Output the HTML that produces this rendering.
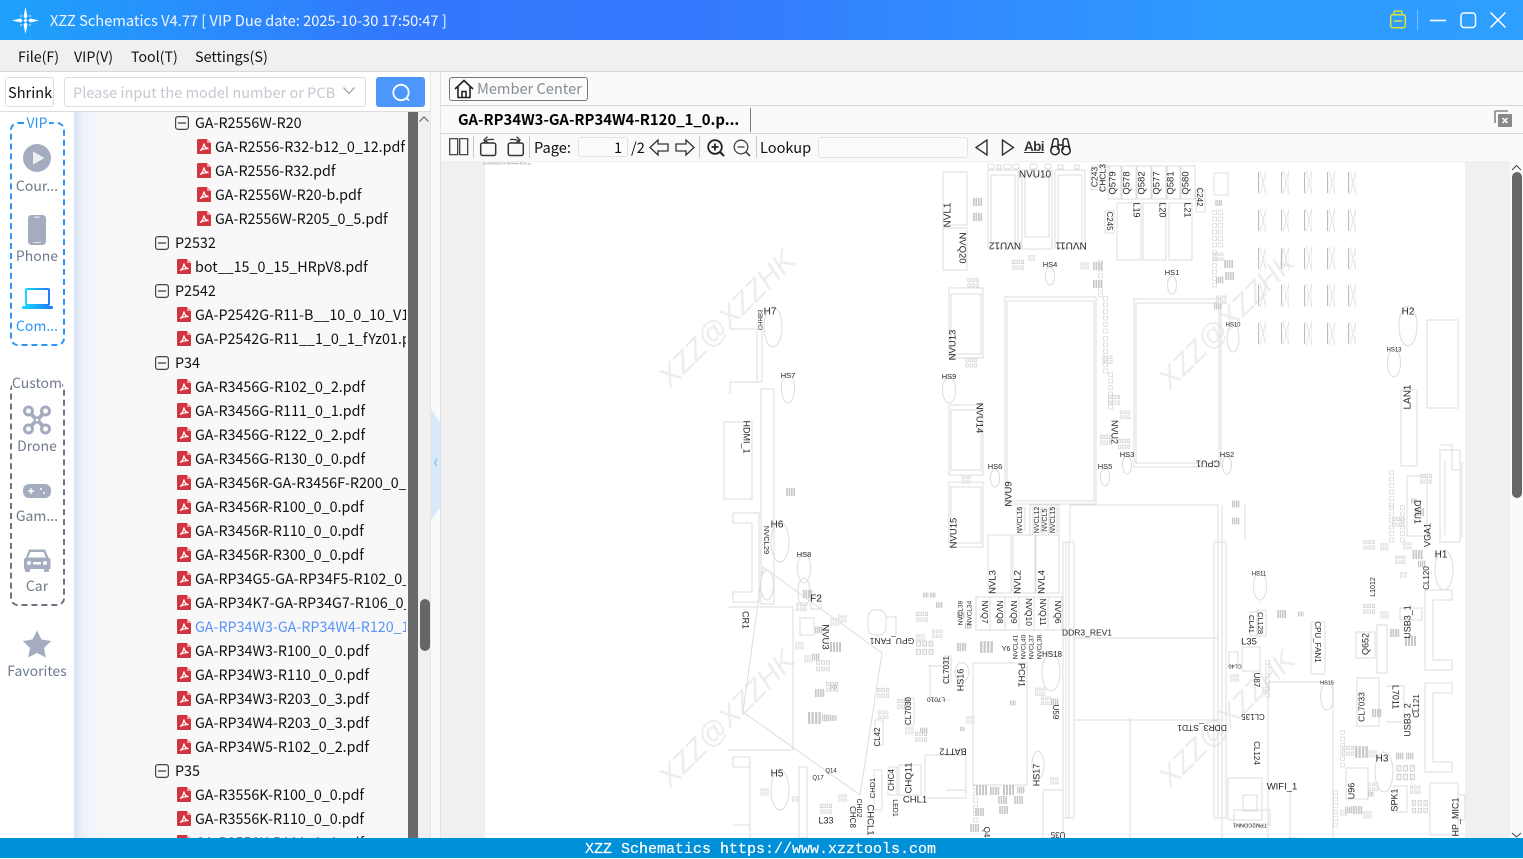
<!DOCTYPE html>
<html><head><meta charset="utf-8"><title>XZZ Schematics</title>
<style>
*{box-sizing:border-box}
html,body{margin:0;padding:0;width:1523px;height:858px;overflow:hidden;background:#fafafa;font-family:"Noto Sans CJK SC","Liberation Sans",sans-serif;color:#111}
.a{position:absolute}
.t{position:absolute;white-space:nowrap;line-height:20px}
#title{left:0;top:0;width:1523px;height:40px;background:linear-gradient(90deg,#1ea2fb 0,#3378fc 26%,#3478fd 45%,#2f9bff 80%,#2e9eff 100%)}
#menu{left:0;top:40px;width:1523px;height:32px;background:#f0f0f0;border-bottom:1px solid #d8d8d8}
#tree{left:74px;top:112px;width:332px;height:726px;overflow:hidden;font-size:14.3px}
#treebg{left:74px;top:112px;width:334px;height:726px;background:linear-gradient(90deg,#d8e3f5 0,#eef2f9 10px,#f8f8f8 34px)}
.r{position:relative;height:24px;line-height:24px;white-space:nowrap}
.r svg{position:absolute;top:5px}
.g1{padding-left:101px}.g1 svg{left:81px}
.g2{padding-left:121px}.g2 svg{left:101px}
.f2{padding-left:121px}.f2 svg{left:103px;top:4px}
.f3{padding-left:141px}.f3 svg{left:123px;top:4px}
.lb{position:absolute;left:0;width:74px;text-align:center;font-size:14px;line-height:20px;color:#6f7a8a}
.box{position:absolute;background:#fff;border:1px solid #ddd;border-radius:3px}
.sep{position:absolute;width:1px;background:#c8c8c8;top:136px;height:22px}
#sch text{font-family:"Liberation Sans",sans-serif;fill:#262626;text-anchor:middle;dominant-baseline:middle}
</style></head><body>
<svg width="0" height="0" style="position:absolute">
<defs>
<symbol id="pdf" viewBox="0 0 14 15"><path d="M1 0H10L14 4V14a1 1 0 0 1-1 1H1a1 1 0 0 1-1-1V1a1 1 0 0 1 1-1z" fill="#d2353f"/><path d="M10 0V4H14z" fill="#ee9aa0"/><path d="M3 11.5C5 10.5 6.5 8 7 4.5 7.5 8 9 9.5 11.5 9.5 9 9.5 5.5 10 3 11.5z" fill="none" stroke="#fff" stroke-width="1.2"/></symbol>
<symbol id="min" viewBox="0 0 14 14"><rect x=".6" y=".6" width="12.8" height="12.8" rx="2.5" fill="none" stroke="#444" stroke-width="1.2"/><path d="M3 7H11" stroke="#333" stroke-width="1.2"/></symbol>
<symbol id="cl" viewBox="0 0 16 12"><path d="M.5.5h3v4h-3zM5.5.5h3v4h-3zM10.5.5h3v4h-3zM.5 7h3v4h-3zM5.5 7h3v4h-3zM10.5 7h3v4h-3z" fill="#f6f6f6" stroke="#c6c6c6" stroke-width=".6"/></symbol>
<symbol id="dk" viewBox="0 0 12 10"><path d="M0 0h2v10H0zM3 0h2v10H3zM6 0h2v10H6zM9 0h2v10H9z" fill="#c8c8c8"/></symbol>
<symbol id="col" viewBox="0 0 6 40"><path d="M.5.5h4v4h-4zM.5 7h4v4h-4zM.5 13.5h4v4h-4zM.5 20h4v4h-4zM.5 26.5h4v4h-4zM.5 33h4v4h-4z" fill="none" stroke="#ccc" stroke-width=".6"/></symbol>
<symbol id="xb" viewBox="0 0 8 25"><path d="M8 .5V24.5M2 24.5L8 .5M2 .5L8 24.5" fill="none" stroke="#dedede" stroke-width=".7"/><rect x="0" y="2" width="1.1" height="21" fill="#bdbdbd"/></symbol>
</defs></svg>

<div class="a" id="title"></div>
<svg class="a" style="left:12px;top:7px" width="27" height="27" viewBox="0 0 27 27"><path d="M13.5 0L15.5 9.5 13.5 12 11.5 9.5zM13.5 27L11.5 17.5 13.5 15 15.5 17.5zM0 13.5L8.5 11.5 11 13.5 8.5 15.5zM27 13.5L18.5 15.5 16 13.5 18.5 11.5z" fill="#fff"/><circle cx="13.5" cy="13.5" r="1.5" fill="#fff"/><circle cx="9" cy="9" r=".9" fill="#cfe6ff"/><circle cx="18" cy="9" r=".9" fill="#cfe6ff"/><circle cx="9" cy="18" r=".9" fill="#cfe6ff"/><circle cx="18" cy="18" r=".9" fill="#cfe6ff"/></svg>
<div class="t" style="left:50px;top:11px;font-size:14.67px;color:#f2f7ff">XZZ Schematics V4.77 [ VIP Due date: 2025-10-30 17:50:47 ]</div>
<svg class="a" style="left:1385px;top:8px" width="130" height="26" viewBox="0 0 130 26"><g fill="none" stroke="#d8e23a" stroke-width="1.5"><rect x="5.7" y="6.7" width="14.6" height="13" rx="2"/><path d="M9 6.5V4.5a1.5 1.5 0 0 1 1.5-1.5h5A1.5 1.5 0 0 1 17 4.5V6.5M9 13H17"/></g><path d="M32.5 2V22" stroke="#7fbcff"/><path d="M45 12.5H61" stroke="#fff" stroke-width="1.6"/><rect x="76" y="5" width="14.5" height="14.5" rx="3" fill="none" stroke="#fff" stroke-width="1.5"/><path d="M105.5 4.5L120.5 19.5M120.5 4.500L105.500 19.500" stroke="#fff" stroke-width="1.5"/></svg>

<div class="a" id="menu"></div>
<div class="t" style="left:18px;top:47px;font-size:14.2px">File(F)</div>
<div class="t" style="left:74px;top:47px;font-size:14.2px">VIP(V)</div>
<div class="t" style="left:131px;top:47px;font-size:14.2px">Tool(T)</div>
<div class="t" style="left:195px;top:47px;font-size:14.4px">Settings(S)</div>

<!-- left toolbar -->
<div class="a" style="left:0;top:72px;width:430px;height:40px;background:#fff;border-bottom:1px solid #dcdcdc"></div>
<div class="box" style="left:5px;top:77px;width:49px;height:30px;border-color:#ddd"></div>
<div class="t" style="left:8px;top:83px;font-size:14.6px">Shrink</div>
<div class="box" style="left:64px;top:77px;width:302px;height:30px"></div>
<div class="t" style="left:73px;top:83px;font-size:14.55px;color:#c4c8cf">Please input the model number or PCB</div>
<svg class="a" style="left:342px;top:86px" width="14" height="10" viewBox="0 0 14 10"><path d="M1.5 1.5L7 7.5 12.5 1.5" fill="none" stroke="#a8abb0" stroke-width="1.4"/></svg>
<div class="a" style="left:376px;top:77px;width:49px;height:30px;background:#4d96fb;border-radius:3px"></div>
<svg class="a" style="left:390px;top:82px" width="22" height="22" viewBox="0 0 22 22"><circle cx="11" cy="10.5" r="7.7" fill="none" stroke="#fff" stroke-width="1.8"/><path d="M16.5 16L19 18.5" stroke="#fff" stroke-width="1.8"/></svg>

<!-- side tabs -->
<div class="a" style="left:0;top:112px;width:74px;height:726px;background:#fff"></div>
<div class="a" style="left:10px;top:122px;width:55px;height:224px;border:2px dashed #2f95f5;border-radius:8px"></div>
<div class="lb" style="top:113px;color:#2f95f5"><span style="background:#fff;padding:0 1px">VIP</span></div>
<svg class="a" style="left:23px;top:144px" width="28" height="28" viewBox="0 0 28 28"><circle cx="14" cy="14" r="14" fill="#a4acbf"/><path d="M10 7.5L21.5 14 10 20.5z" fill="#eef0f4"/></svg>
<div class="lb" style="top:176px">Cour...</div>
<svg class="a" style="left:28px;top:214px" width="18" height="32" viewBox="0 0 18 32"><rect width="18" height="30" y="1" rx="3.5" fill="#a4acbf"/><rect x="6" y="2.5" width="6" height="1.5" rx=".7" fill="#dfe2e9"/><rect x="5" y="28" width="8" height="1" fill="#dfe2e9"/></svg>
<div class="lb" style="top:246px">Phone</div>
<svg class="a" style="left:22px;top:288px" width="31" height="22" viewBox="0 0 31 22"><defs><linearGradient id="lg" x1="0" y1="0" x2="1" y2="0"><stop offset="0" stop-color="#18d4ff"/><stop offset="1" stop-color="#1f7dff"/></linearGradient></defs><rect x="4" y="1" width="23" height="16" rx="1" fill="none" stroke="url(#lg)" stroke-width="2"/><rect x="0" y="18" width="31" height="3" rx="1.2" fill="url(#lg)"/></svg>
<div class="lb" style="top:316px;color:#2f95f5">Com...</div>

<div class="a" style="left:10px;top:382px;width:55px;height:224px;border:2px dashed #6b7480;border-radius:8px"></div>
<div class="lb" style="top:373px"><span style="background:#fff">Custom</span></div>
<svg class="a" style="left:23px;top:405px" width="28" height="30" viewBox="0 0 28 30"><g fill="none" stroke="#a4acbf"><circle cx="5.5" cy="6" r="4" stroke-width="3"/><circle cx="22.5" cy="6" r="4" stroke-width="3"/><circle cx="5.5" cy="24" r="4" stroke-width="3"/><circle cx="22.5" cy="24" r="4" stroke-width="3"/><path d="M8 9L20 21M20 9L8 21" stroke-width="4"/></g><circle cx="14" cy="15" r="3.5" fill="#a4acbf"/><circle cx="14" cy="15" r="1.3" fill="#fff"/></svg>
<div class="lb" style="top:436px">Drone</div>
<svg class="a" style="left:23px;top:484px" width="28" height="14" viewBox="0 0 28 14"><rect width="28" height="14" rx="6" fill="#a4acbf"/><path d="M5 7H11M8 4V10" stroke="#fff" stroke-width="1.4"/><circle cx="18" cy="5" r="1" fill="#fff"/><circle cx="21" cy="9" r="1" fill="#fff"/></svg>
<div class="lb" style="top:506px">Gam...</div>
<svg class="a" style="left:23px;top:548px" width="28" height="24" viewBox="0 0 28 24"><path d="M6 1.5H22L25.5 9.5 27.5 11V21H1V11L3 9.5z" fill="#a4acbf"/><path d="M7.5 4H20.5L23 9.5H5z" fill="#fff"/><rect x="2" y="20" width="5" height="4" rx="1" fill="#a4acbf"/><rect x="21" y="20" width="5" height="4" rx="1" fill="#a4acbf"/><circle cx="6" cy="15" r="2" fill="#fff"/><circle cx="22" cy="15" r="2" fill="#fff"/><rect x="10" y="14" width="8" height="2.5" fill="#fff"/></svg>
<div class="lb" style="top:576px">Car</div>
<svg class="a" style="left:22px;top:630px" width="30" height="28" viewBox="0 0 30 28"><path d="M15 .5L19.5 9.5 29.2 11 22 18 23.8 27.5 15 23 6.2 27.5 8 18 .8 11 10.5 9.5z" fill="#a4acbf"/></svg>
<div class="lb" style="top:661px">Favorites</div>

<!-- tree -->
<div class="a" id="treebg"></div>
<div class="a" id="tree"><div style="margin-top:-1px">
<div class="r g2"><svg width="14" height="14"><use href="#min"/></svg>GA-R2556W-R20</div>
<div class="r f3"><svg width="14" height="15"><use href="#pdf"/></svg>GA-R2556-R32-b12_0_12.pdf</div>
<div class="r f3"><svg width="14" height="15"><use href="#pdf"/></svg>GA-R2556-R32.pdf</div>
<div class="r f3"><svg width="14" height="15"><use href="#pdf"/></svg>GA-R2556W-R20-b.pdf</div>
<div class="r f3"><svg width="14" height="15"><use href="#pdf"/></svg>GA-R2556W-R205_0_5.pdf</div>
<div class="r g1"><svg width="14" height="14"><use href="#min"/></svg>P2532</div>
<div class="r f2"><svg width="14" height="15"><use href="#pdf"/></svg>bot__15_0_15_HRpV8.pdf</div>
<div class="r g1"><svg width="14" height="14"><use href="#min"/></svg>P2542</div>
<div class="r f2"><svg width="14" height="15"><use href="#pdf"/></svg>GA-P2542G-R11-B__10_0_10_V1.pdf</div>
<div class="r f2"><svg width="14" height="15"><use href="#pdf"/></svg>GA-P2542G-R11__1_0_1_fYz01.pdf</div>
<div class="r g1"><svg width="14" height="14"><use href="#min"/></svg>P34</div>
<div class="r f2"><svg width="14" height="15"><use href="#pdf"/></svg>GA-R3456G-R102_0_2.pdf</div>
<div class="r f2"><svg width="14" height="15"><use href="#pdf"/></svg>GA-R3456G-R111_0_1.pdf</div>
<div class="r f2"><svg width="14" height="15"><use href="#pdf"/></svg>GA-R3456G-R122_0_2.pdf</div>
<div class="r f2"><svg width="14" height="15"><use href="#pdf"/></svg>GA-R3456G-R130_0_0.pdf</div>
<div class="r f2"><svg width="14" height="15"><use href="#pdf"/></svg>GA-R3456R-GA-R3456F-R200_0_2.pdf</div>
<div class="r f2"><svg width="14" height="15"><use href="#pdf"/></svg>GA-R3456R-R100_0_0.pdf</div>
<div class="r f2"><svg width="14" height="15"><use href="#pdf"/></svg>GA-R3456R-R110_0_0.pdf</div>
<div class="r f2"><svg width="14" height="15"><use href="#pdf"/></svg>GA-R3456R-R300_0_0.pdf</div>
<div class="r f2"><svg width="14" height="15"><use href="#pdf"/></svg>GA-RP34G5-GA-RP34F5-R102_0_2.pdf</div>
<div class="r f2"><svg width="14" height="15"><use href="#pdf"/></svg>GA-RP34K7-GA-RP34G7-R106_0_6.pdf</div>
<div class="r f2" style="color:#5b93f5"><svg width="14" height="15"><use href="#pdf"/></svg>GA-RP34W3-GA-RP34W4-R120_1_0.pdf</div>
<div class="r f2"><svg width="14" height="15"><use href="#pdf"/></svg>GA-RP34W3-R100_0_0.pdf</div>
<div class="r f2"><svg width="14" height="15"><use href="#pdf"/></svg>GA-RP34W3-R110_0_0.pdf</div>
<div class="r f2"><svg width="14" height="15"><use href="#pdf"/></svg>GA-RP34W3-R203_0_3.pdf</div>
<div class="r f2"><svg width="14" height="15"><use href="#pdf"/></svg>GA-RP34W4-R203_0_3.pdf</div>
<div class="r f2"><svg width="14" height="15"><use href="#pdf"/></svg>GA-RP34W5-R102_0_2.pdf</div>
<div class="r g1"><svg width="14" height="14"><use href="#min"/></svg>P35</div>
<div class="r f2"><svg width="14" height="15"><use href="#pdf"/></svg>GA-R3556K-R100_0_0.pdf</div>
<div class="r f2"><svg width="14" height="15"><use href="#pdf"/></svg>GA-R3556K-R110_0_0.pdf</div>
<div class="r f2"><svg width="14" height="15"><use href="#pdf"/></svg>GA-R3556K-R101_0_1.pdf</div>
</div></div>
<div class="a" style="left:408px;top:112px;width:10px;height:726px;background:#696969"></div>
<div class="a" style="left:418px;top:112px;width:12px;height:726px;background:#f0f0f0"></div>
<svg class="a" style="left:418px;top:114px" width="12" height="10" viewBox="0 0 12 10"><path d="M1.5 7.5L6 3 10.5 7.5" fill="none" stroke="#555" stroke-width="1"/></svg>
<div class="a" style="left:420px;top:599px;width:10px;height:52px;background:#666;border-radius:5px"></div>

<!-- splitter -->
<div class="a" style="left:430px;top:72px;width:1px;height:766px;background:#e6e6e6"></div>
<div class="a" style="left:440px;top:72px;width:1px;height:766px;background:#e2e2e2"></div>
<svg class="a" style="left:431px;top:409px" width="10" height="112" viewBox="0 0 10 112"><path d="M0 0L9 13V99L0 111z" fill="#d6eafc"/><path d="M6 50L3.5 53.5 6 57" fill="none" stroke="#7db0e8" stroke-width="1"/></svg>

<!-- right header -->
<div class="a" style="left:441px;top:105px;width:1082px;height:1px;background:#d8d8d8"></div>
<div class="a" style="left:441px;top:133px;width:1082px;height:1px;background:#d8d8d8"></div>
<div class="a" style="left:449px;top:77px;width:139px;height:24px;border:1px solid #777;border-radius:3px;background:#fbfbfb"></div>
<svg class="a" style="left:454px;top:79px" width="20" height="20" viewBox="0 0 20 20"><path d="M1 10L10 1.5 19 10M4 8V18.5H16V8M8 18.5V12.5H12V18.5" fill="none" stroke="#222" stroke-width="1.6"/></svg>
<div class="t" style="left:477px;top:79px;font-size:14.6px;color:#858d96">Member Center</div>
<div class="t" style="left:458px;top:110px;font-size:14.85px;font-weight:700;color:#000">GA-RP34W3-GA-RP34W4-R120_1_0.p...</div>
<div class="a" style="left:750px;top:108px;width:1px;height:24px;background:#777"></div>
<svg class="a" style="left:1494px;top:110px" width="19" height="18" viewBox="0 0 19 18"><path d="M1 13V2a1 1 0 0 1 1-1H14" fill="none" stroke="#888" stroke-width="1.6"/><rect x="4" y="4" width="14" height="13" rx="1" fill="#888"/><path d="M8.5 8L13.5 13M13.5 8L8.5 13" stroke="#fff" stroke-width="1.5"/></svg>

<!-- pdf toolbar -->
<svg class="a" style="left:449px;top:138px" width="20" height="18" viewBox="0 0 20 18"><path d="M.7.7H8.700V16.700H.7zM10.700.7H18.700V16.700H10.700z" fill="none" stroke="#333" stroke-width="1.2"/></svg>
<div class="sep" style="left:473px"></div>
<svg class="a" style="left:479px;top:136px" width="20" height="21" viewBox="0 0 20 21"><rect x="1.7" y="7" width="15" height="12.5" rx="2" fill="none" stroke="#333" stroke-width="1.5"/><path d="M5 7C6 3.5 10 3 15 3.5" fill="none" stroke="#333" stroke-width="1.3"/><path d="M8.5.7L5 4 9 6.7" fill="none" stroke="#333" stroke-width="1.3"/></svg>
<svg class="a" style="left:505px;top:136px" width="20" height="21" viewBox="0 0 20 21"><g transform="matrix(-1 0 0 1 20 0)"><rect x="1.7" y="7" width="15" height="12.5" rx="2" fill="none" stroke="#333" stroke-width="1.5"/><path d="M5 7C6 3.5 10 3 15 3.5" fill="none" stroke="#333" stroke-width="1.3"/><path d="M8.5.7L5 4 9 6.7" fill="none" stroke="#333" stroke-width="1.3"/></g></svg>
<div class="sep" style="left:529px"></div>
<div class="t" style="left:534px;top:138px;font-size:14.6px">Page:</div>
<div class="box" style="left:578px;top:137px;width:50px;height:20px;background:#fbfbfb;border-color:#e2e2e2"></div>
<div class="t" style="left:614px;top:138px;font-size:14.6px">1</div>
<div class="t" style="left:631px;top:138px;font-size:14.6px">/2</div>
<svg class="a" style="left:649px;top:138px" width="46" height="19" viewBox="0 0 46 19"><path d="M1 9.5L9 2V6H19V13H9V17z" fill="none" stroke="#333" stroke-width="1.3"/><path d="M45 9.5L37 2V6H27V13H37V17z" fill="none" stroke="#333" stroke-width="1.3"/></svg>
<div class="sep" style="left:699px"></div>
<svg class="a" style="left:706px;top:138px" width="46" height="19" viewBox="0 0 46 19"><circle cx="9" cy="9" r="6.8" fill="none" stroke="#222" stroke-width="1.8"/><path d="M14 14L18 18" stroke="#222" stroke-width="2"/><path d="M5.5 9H12.5M9 5.5V12.5" stroke="#222" stroke-width="1.8"/><circle cx="35" cy="9" r="6.8" fill="none" stroke="#444" stroke-width="1.3"/><path d="M40 14L44 18" stroke="#444" stroke-width="1.6"/><path d="M31.5 9H38.5" stroke="#444" stroke-width="1.3"/></svg>
<div class="sep" style="left:756px"></div>
<div class="t" style="left:760px;top:138px;font-size:14.6px">Lookup</div>
<div class="box" style="left:818px;top:137px;width:150px;height:21px;background:#fbfbfb;border-color:#e2e2e2"></div>
<svg class="a" style="left:974px;top:139px" width="42" height="17" viewBox="0 0 42 17"><path d="M13 1L2 8.5 13 16zM28.500 1L39.500 8.500 28.500 16z" fill="none" stroke="#333" stroke-width="1.4"/></svg>
<div class="t" style="left:1024px;top:137px;font-size:13.5px;font-weight:700;color:#333;font-family:'Liberation Sans',sans-serif;text-decoration:underline;letter-spacing:-.6px">Abi</div>
<svg class="a" style="left:1050px;top:138px" width="21" height="18" viewBox="0 0 21 18"><g fill="none" stroke="#222" stroke-width="1.5"><circle cx="5" cy="12.5" r="4.2"/><circle cx="16" cy="12.5" r="4.2"/><path d="M1 12L3 3A2.2 2.2 0 0 1 8 3V12M13 12V3A2.2 2.2 0 0 1 18 3L20 12M8 7H13"/></g></svg>

<!-- doc area -->
<div class="a" style="left:441px;top:161px;width:1069px;height:677px;background:#f0f0f0"></div>
<div class="a" style="left:1510px;top:161px;width:13px;height:677px;background:#fafafa"></div>
<svg class="a" style="left:1510px;top:164px" width="13" height="8" viewBox="0 0 13 8"><path d="M2 6L6.5 1.5 11 6" fill="none" stroke="#444"/></svg>
<svg class="a" style="left:1510px;top:832px" width="13" height="6" viewBox="0 0 13 6"><path d="M2 1L6.5 5 11 1" fill="none" stroke="#444"/></svg>
<div class="a" style="left:1512px;top:172px;width:10px;height:326px;background:#666;border-radius:5px"></div>

<svg id="sch" class="a" style="left:0;top:0" width="1523" height="858" viewBox="0 0 1523 858">
<rect x="485" y="162" width="980" height="676" fill="#fff"/>
<g font-style="italic">
<text x="728" y="320" transform="rotate(-45 728 320)" font-size="29" style="fill:#ebedf0">XZZ@XZZHK</text>
<text x="1228" y="322" transform="rotate(-45 1228 322)" font-size="29" style="fill:#ebedf0">XZZ@XZZHK</text>
<text x="728" y="720" transform="rotate(-45 728 720)" font-size="29" style="fill:#ebedf0">XZZ@XZZHK</text>
<text x="1228" y="720" transform="rotate(-45 1228 720)" font-size="29" style="fill:#ebedf0">XZZ@XZZHK</text>
</g>
<text x="507" y="163.5" font-size="3" style="fill:#777">GA-RP34W3-GA-RP34W4-R120.sc</text>

<g fill="none" stroke="#dcdcdc" stroke-width="1">
<!-- top tiny parts -->
<rect x="988" y="164" width="6" height="5" rx="2"/><rect x="997" y="165" width="4" height="4"/><rect x="1004" y="164" width="7" height="5" rx="2"/><rect x="1013" y="164" width="6" height="5" rx="2"/><rect x="1030" y="164" width="7" height="5" rx="2"/><rect x="1045" y="164" width="6" height="5" rx="2"/><rect x="1058" y="165" width="5" height="4"/><rect x="1075" y="165" width="4" height="4"/>
<!-- large parts -->
<rect x="1005" y="297" width="91" height="207"/><rect x="1007" y="301" width="87" height="200"/>
<rect x="1134" y="299" width="87" height="168"/><rect x="1136" y="303" width="83" height="160"/>
<rect x="988" y="170" width="30" height="78"/><rect x="1022" y="170" width="30" height="79"/><rect x="1055" y="170" width="30" height="78"/>
<rect x="991" y="175" width="24" height="68"/><rect x="1025" y="175" width="24" height="62"/><rect x="1058" y="175" width="24" height="68"/>
<rect x="949" y="288" width="34" height="70"/><rect x="951" y="294" width="30" height="60"/>
<rect x="949" y="405" width="34" height="70"/><rect x="951" y="410" width="30" height="60"/>
<rect x="949" y="482" width="34" height="65"/><rect x="951" y="487" width="30" height="56"/>
<rect x="943" y="172" width="24" height="53"/>
<rect x="1108" y="166" width="13" height="33"/><rect x="1122" y="166" width="14" height="33"/><rect x="1137" y="166" width="14" height="33"/><rect x="1152" y="166" width="14" height="33"/><rect x="1167" y="166" width="13" height="33"/><rect x="1181" y="166" width="14" height="33"/>
<rect x="1117" y="203" width="24" height="57"/><rect x="1143" y="203" width="23" height="57"/><rect x="1169" y="203" width="23" height="57"/>
<rect x="1091" y="166" width="10" height="24"/><rect x="1101" y="166" width="9" height="24"/><rect x="1196" y="190" width="9" height="22"/><rect x="1105" y="211" width="9" height="22"/>
<rect x="943" y="228" width="24" height="42"/>
<rect x="1214" y="173" width="14" height="22"/>
<!-- ovals -->
<ellipse cx="1050" cy="276" rx="4.5" ry="9"/><ellipse cx="1172" cy="285" rx="4.5" ry="9"/><ellipse cx="949" cy="390" rx="6.5" ry="13"/><ellipse cx="995" cy="478" rx="4.5" ry="9"/><ellipse cx="1105" cy="477" rx="4.5" ry="9"/><ellipse cx="1127" cy="465" rx="4.5" ry="9"/><ellipse cx="1227" cy="465" rx="4.5" ry="9"/>
<ellipse cx="773" cy="327" rx="9" ry="20"/><ellipse cx="788" cy="388" rx="6.5" ry="15"/><ellipse cx="780" cy="542" rx="9" ry="20"/><ellipse cx="804" cy="568" rx="6.5" ry="15"/><ellipse cx="767" cy="585" rx="6.5" ry="15"/><ellipse cx="804" cy="592" rx="6" ry="14"/>
<ellipse cx="780" cy="790" rx="9" ry="20"/><ellipse cx="1384" cy="772" rx="9" ry="20"/><ellipse cx="1444" cy="570" rx="9" ry="20"/><ellipse cx="1260" cy="586" rx="6.5" ry="14"/><ellipse cx="1327" cy="696" rx="6.5" ry="14"/><ellipse cx="1051" cy="672" rx="9" ry="19"/><ellipse cx="962" cy="672" rx="7" ry="9"/><ellipse cx="1038" cy="765" rx="6" ry="14"/><ellipse cx="1408" cy="326" rx="9" ry="20"/><ellipse cx="1394" cy="363" rx="6.5" ry="14"/><ellipse cx="1233" cy="338" rx="6" ry="14"/>
<!-- left connectors -->
<rect x="724" y="422" width="28" height="77"/>
<rect x="761" y="389" width="13" height="215"/>
<path d="M730 329H757M757 329V382H730V394M762 329V382M757 382H762"/>
<path d="M733 513H759V602H733V592H752V523H733z"/>
<path d="M728 607H793V750H728"/>
<path d="M763 567L882 653L860 795L743 712z"/>
<path d="M733 757H750V767H733zM750 767V838M733 825H750"/>
<rect x="799" y="767" width="8" height="71"/>
<!-- middle parts -->
<rect x="973" y="663" width="54" height="122"/>
<rect x="988" y="535" width="23" height="58"/><rect x="1013" y="535" width="22" height="58"/><rect x="1036" y="535" width="23" height="58"/>
<rect x="976" y="597" width="14" height="33"/><rect x="990" y="597" width="15" height="33"/><rect x="1005" y="597" width="14" height="33"/><rect x="1019" y="597" width="15" height="33"/><rect x="1034" y="597" width="14" height="33"/><rect x="1048" y="597" width="14" height="33"/>
<rect x="1063" y="542" width="11" height="276"/><path d="M1066 542V818M1069 542V818"/>
<path d="M1070 505H1218V638H1074M1074 720H1222"/>
<rect x="1214" y="542" width="12" height="276"/><path d="M1218 542V818"/>
<path d="M1222 505V838M1268 682H1333V838M1268 682V838M1245 540V505"/>
<path d="M1130 718V838M1070 505V541"/>
<rect x="1030" y="505" width="29" height="30"/>
<rect x="1017" y="508" width="8" height="22"/><rect x="1033" y="508" width="8" height="24"/><rect x="1042" y="508" width="7" height="24"/><rect x="1050" y="508" width="7" height="24"/>
<path d="M925 755H966V798H925zM946 790H966"/>
<path d="M950 666H930V700H950M928 666H948"/>
<rect x="899" y="765" width="22" height="30"/>
<rect x="874" y="770" width="8" height="40"/><rect x="888" y="767" width="9" height="28"/>
<rect x="1043" y="790" width="20" height="48"/>
<rect x="868" y="610" width="18" height="25" rx="7"/><path d="M886 617H896V635"/>
<rect x="811" y="597" width="10" height="12"/>
<rect x="800" y="618" width="14" height="17"/>
<rect x="875" y="720" width="8" height="25"/><rect x="905" y="698" width="9" height="27"/><rect x="944" y="656" width="7" height="26"/>
<!-- right side -->
<rect x="1427" y="320" width="31" height="88"/><rect x="1401" y="390" width="16" height="76"/><path d="M1440 445H1452V470H1462"/>
<path d="M1425 590H1452V600H1433V660H1452V670H1425zM1425 683H1452V693H1433V762H1452V772H1425z"/>
<rect x="1430" y="783" width="28" height="52"/><path d="M1458 795H1465V820H1458"/>
<rect x="1440" y="450" width="20" height="92"/><path d="M1445 460V535M1462 462V538"/>
<rect x="1407" y="476" width="20" height="60"/>
<rect x="1356" y="632" width="19" height="26"/><rect x="1377" y="625" width="10" height="48"/>
<rect x="1357" y="678" width="22" height="48"/><path d="M1386 686H1404V722H1386"/>
<rect x="1346" y="768" width="22" height="31"/><rect x="1394" y="786" width="13" height="26"/>
<rect x="1234" y="810" width="36" height="15"/><rect x="1228" y="778" width="34" height="42"/><rect x="1243" y="795" width="14" height="16"/>
<rect x="1242" y="647" width="18" height="24"/><rect x="1229" y="652" width="9" height="14"/>
<rect x="1250" y="612" width="8" height="24"/><rect x="1257" y="610" width="9" height="26"/>
<rect x="1311" y="622" width="14" height="52"/>
<path d="M1297 838H1290V790"/>
<rect x="1400" y="608" width="22" height="12"/>
</g>

<!-- X boxes grid -->
<g>
<use href="#xb" x="1258" y="170" width="8" height="25"/><use href="#xb" x="1281" y="170" width="8" height="25"/><use href="#xb" x="1304" y="170" width="8" height="25"/><use href="#xb" x="1327" y="170" width="8" height="25"/><use href="#xb" x="1348" y="170" width="8" height="25"/>
<use href="#xb" x="1258" y="208" width="8" height="25"/><use href="#xb" x="1281" y="208" width="8" height="25"/><use href="#xb" x="1304" y="208" width="8" height="25"/><use href="#xb" x="1327" y="208" width="8" height="25"/><use href="#xb" x="1348" y="208" width="8" height="25"/>
<use href="#xb" x="1258" y="246" width="8" height="25"/><use href="#xb" x="1281" y="246" width="8" height="25"/><use href="#xb" x="1304" y="246" width="8" height="25"/><use href="#xb" x="1327" y="246" width="8" height="25"/><use href="#xb" x="1348" y="246" width="8" height="25"/>
<use href="#xb" x="1258" y="283" width="8" height="25"/><use href="#xb" x="1281" y="283" width="8" height="25"/><use href="#xb" x="1304" y="283" width="8" height="25"/><use href="#xb" x="1327" y="283" width="8" height="25"/><use href="#xb" x="1348" y="283" width="8" height="25"/>
<use href="#xb" x="1258" y="321" width="8" height="25"/><use href="#xb" x="1281" y="321" width="8" height="25"/><use href="#xb" x="1304" y="321" width="8" height="25"/><use href="#xb" x="1327" y="321" width="8" height="25"/><use href="#xb" x="1348" y="321" width="8" height="25"/>
</g>

<!-- tiny columns -->
<use href="#col" x="1103" y="296" width="6" height="40"/><use href="#col" x="1103" y="336" width="6" height="40"/><use href="#col" x="1108" y="372" width="6" height="40"/>
<use href="#col" x="1212" y="210" width="6" height="40"/><use href="#col" x="1218" y="210" width="6" height="40"/><use href="#col" x="1212" y="250" width="6" height="40"/>
<use href="#col" x="1389" y="470" width="6" height="40"/><use href="#col" x="1389" y="505" width="6" height="40"/><use href="#col" x="1400" y="505" width="6" height="40"/>
<use href="#col" x="1265" y="660" width="6" height="40"/><use href="#col" x="1340" y="730" width="6" height="40"/><use href="#col" x="1333" y="790" width="6" height="40"/>
<use href="#col" x="1098" y="260" width="6" height="40"/>
<use href="#col" x="973" y="785" width="6" height="40"/>

<!-- dark clusters -->
<g>
<use href="#dk" x="1093" y="258" width="10" height="16"/><use href="#dk" x="1093" y="276" width="10" height="16"/>
<use href="#dk" x="973" y="195" width="10" height="14"/><use href="#dk" x="973" y="210" width="10" height="14"/>
<use href="#dk" x="1212" y="200" width="14" height="6"/><use href="#dk" x="1224" y="260" width="10" height="8"/><use href="#dk" x="1225" y="272" width="10" height="8"/><use href="#dk" x="1214" y="300" width="8" height="12"/><use href="#dk" x="1216" y="273" width="8" height="14"/>
<use href="#dk" x="786" y="488" width="10" height="8"/>
<use href="#dk" x="803" y="588" width="10" height="12"/>
<use href="#dk" x="923" y="590" width="6" height="10"/><use href="#dk" x="930" y="590" width="6" height="10"/><use href="#dk" x="936" y="600" width="7" height="10"/>
<use href="#dk" x="957" y="605" width="8" height="20"/><use href="#dk" x="965" y="620" width="7" height="12"/>
<use href="#dk" x="980" y="640" width="14" height="14"/><use href="#dk" x="957" y="640" width="10" height="14"/>
<use href="#dk" x="1275" y="610" width="14" height="8"/><use href="#dk" x="1298" y="610" width="6" height="8"/>
<use href="#dk" x="1411" y="495" width="6" height="12"/><use href="#dk" x="1415" y="505" width="10" height="14"/><use href="#dk" x="1412" y="550" width="12" height="9"/><use href="#dk" x="1418" y="560" width="8" height="8"/>
<use href="#dk" x="1390" y="625" width="10" height="16"/><use href="#dk" x="1405" y="636" width="12" height="10"/>
<use href="#dk" x="1396" y="748" width="8" height="16"/><use href="#dk" x="1406" y="748" width="8" height="16"/>
<use href="#dk" x="1345" y="803" width="8" height="14"/><use href="#dk" x="1353" y="803" width="10" height="14"/><use href="#dk" x="1368" y="790" width="6" height="8"/>
<use href="#dk" x="1355" y="745" width="14" height="14"/>
<use href="#dk" x="1372" y="705" width="10" height="16"/>
<use href="#dk" x="815" y="625" width="8" height="10"/><use href="#dk" x="830" y="640" width="12" height="14"/><use href="#dk" x="812" y="650" width="8" height="14"/>
<use href="#dk" x="815" y="685" width="10" height="16"/><use href="#dk" x="830" y="680" width="8" height="14"/>
<use href="#dk" x="808" y="710" width="14" height="16"/><use href="#dk" x="822" y="710" width="8" height="16"/><use href="#dk" x="830" y="710" width="7" height="16"/>
<use href="#dk" x="920" y="725" width="8" height="12"/><use href="#dk" x="960" y="725" width="5" height="8"/>
<use href="#dk" x="975" y="785" width="14" height="10"/><use href="#dk" x="990" y="786" width="10" height="10"/><use href="#dk" x="1002" y="785" width="14" height="10"/><use href="#dk" x="1017" y="785" width="8" height="10"/>
<use href="#dk" x="996" y="796" width="14" height="8"/><use href="#dk" x="1010" y="796" width="18" height="8"/>
<use href="#dk" x="974" y="808" width="12" height="8"/><use href="#dk" x="998" y="806" width="12" height="8"/><use href="#dk" x="970" y="824" width="10" height="8"/>
<use href="#dk" x="1051" y="697" width="8" height="10"/><use href="#dk" x="1010" y="700" width="6" height="6"/>
<use href="#dk" x="1232" y="495" width="8" height="18"/><use href="#dk" x="1232" y="515" width="8" height="12"/>
</g>
<g>
<use href="#cl" x="1102" y="345" width="12" height="30"/><use href="#cl" x="1108" y="385" width="14" height="30"/><use href="#cl" x="1120" y="400" width="12" height="30"/><use href="#cl" x="1100" y="430" width="14" height="20"/>
<use href="#cl" x="1118" y="435" width="14" height="18"/>
<use href="#cl" x="1213" y="245" width="12" height="24"/><use href="#cl" x="1216" y="290" width="12" height="20"/>
<use href="#cl" x="960" y="358" width="24" height="10"/>
<use href="#cl" x="950" y="476" width="34" height="8"/><use href="#cl" x="962" y="278" width="24" height="10"/>
<use href="#cl" x="1028" y="252" width="8" height="12"/><use href="#cl" x="1012" y="256" width="14" height="18"/>
<use href="#cl" x="1080" y="256" width="10" height="20"/>
<use href="#cl" x="796" y="600" width="12" height="14"/>
<use href="#cl" x="830" y="615" width="10" height="14"/><use href="#cl" x="838" y="612" width="10" height="14"/>
<use href="#cl" x="795" y="632" width="10" height="28"/><use href="#cl" x="804" y="645" width="10" height="28"/>
<use href="#cl" x="815" y="660" width="18" height="12"/><use href="#cl" x="826" y="680" width="14" height="14"/>
<use href="#cl" x="916" y="605" width="14" height="24"/><use href="#cl" x="916" y="630" width="10" height="16"/>
<use href="#cl" x="916" y="640" width="20" height="16"/><use href="#cl" x="932" y="625" width="12" height="18"/>
<use href="#cl" x="877" y="685" width="14" height="16"/><use href="#cl" x="878" y="708" width="12" height="14"/><use href="#cl" x="897" y="695" width="14" height="18"/>
<use href="#cl" x="915" y="730" width="14" height="14"/>
<use href="#cl" x="905" y="725" width="10" height="12"/>
<use href="#cl" x="966" y="710" width="10" height="20"/>
<use href="#cl" x="1035" y="685" width="12" height="14"/>
<use href="#cl" x="1041" y="695" width="12" height="12"/>
<use href="#cl" x="1050" y="775" width="10" height="12"/>
<use href="#cl" x="1230" y="670" width="10" height="16"/>
<use href="#cl" x="1262" y="670" width="8" height="40"/>
<use href="#cl" x="1380" y="540" width="10" height="14"/>
<use href="#cl" x="1363" y="600" width="14" height="18"/>
<use href="#cl" x="1395" y="555" width="12" height="10"/>
<use href="#cl" x="1400" y="570" width="8" height="10"/>
<use href="#cl" x="1380" y="605" width="10" height="20"/>
<use href="#cl" x="1342" y="740" width="14" height="22"/>
<use href="#cl" x="1368" y="740" width="10" height="28"/>
<use href="#cl" x="1368" y="772" width="12" height="30"/>
<use href="#cl" x="1340" y="800" width="8" height="26"/>
<use href="#cl" x="1363" y="802" width="10" height="26"/>
<use href="#cl" x="1395" y="765" width="24" height="16"/>
<use href="#cl" x="1410" y="780" width="12" height="20"/>
<use href="#cl" x="1410" y="800" width="22" height="14"/>
<use href="#cl" x="1392" y="515" width="14" height="14"/>
<use href="#cl" x="1363" y="540" width="14" height="10"/>
<use href="#cl" x="1403" y="540" width="10" height="12"/>
<use href="#cl" x="1420" y="470" width="14" height="18"/>
<use href="#cl" x="760" y="785" width="10" height="14"/>
<use href="#cl" x="792" y="785" width="8" height="28"/>
<use href="#cl" x="820" y="803" width="14" height="12"/>
<use href="#cl" x="838" y="792" width="10" height="12"/>
</g>

<!-- labels -->
<g font-size="9">
<text x="1035" y="175" font-size="10">NVU10</text>
<text x="1005" y="245" font-size="10" transform="rotate(180 1005 245)">NVU12</text>
<text x="1071" y="245" font-size="10" transform="rotate(180 1071 245)">NVU11</text>
<text x="948" y="215" font-size="10" transform="rotate(-90 948 215)">NVL1</text>
<text x="962" y="248" font-size="9.5" transform="rotate(90 962 248)">NVQ20</text>
<text x="1095" y="177" font-size="8.5" transform="rotate(-90 1095 177)">C243</text>
<text x="1103" y="178" font-size="8.5" transform="rotate(-90 1103 178)">CHCL3</text>
<text x="1113" y="183" font-size="9.5" transform="rotate(-90 1113 183)">Q579</text>
<text x="1127" y="183" font-size="9.5" transform="rotate(-90 1127 183)">Q578</text>
<text x="1142" y="183" font-size="9.5" transform="rotate(-90 1142 183)">Q582</text>
<text x="1157" y="183" font-size="9.5" transform="rotate(-90 1157 183)">Q577</text>
<text x="1171" y="183" font-size="9.5" transform="rotate(-90 1171 183)">Q581</text>
<text x="1186" y="183" font-size="9.5" transform="rotate(-90 1186 183)">Q580</text>
<text x="1199" y="197" font-size="8" transform="rotate(90 1199 197)">C242</text>
<text x="1109" y="221" font-size="8" transform="rotate(90 1109 221)">C245</text>
<text x="1136" y="210" transform="rotate(90 1136 210)">L19</text>
<text x="1162" y="210" transform="rotate(90 1162 210)">L20</text>
<text x="1187" y="210" transform="rotate(90 1187 210)">L21</text>
<text x="1050" y="265" font-size="7.5">HS4</text>
<text x="1172" y="273" font-size="7.5">HS1</text>
<text x="953" y="345" font-size="9.5" transform="rotate(-90 953 345)">NVU13</text>
<text x="949" y="377" font-size="7.5">HS9</text>
<text x="979" y="418" font-size="9.5" transform="rotate(90 979 418)">NVU14</text>
<text x="995" y="467" font-size="7.5">HS6</text>
<text x="1009" y="494" font-size="9.5" transform="rotate(-90 1009 494)">NVU9</text>
<text x="1105" y="467" font-size="7.5">HS5</text>
<text x="1127" y="455" font-size="7.5">HS3</text>
<text x="1114" y="432" font-size="9" transform="rotate(90 1114 432)">NVU2</text>
<text x="1208" y="463" font-size="9" transform="rotate(180 1208 463)">CPU1</text>
<text x="1227" y="455" font-size="7.5">HS2</text>
<text x="1408" y="312" font-size="10">H2</text>
<text x="1394" y="350" font-size="6">HS13</text>
<text x="1408" y="397" font-size="10" transform="rotate(-90 1408 397)">LAN1</text>
<text x="1233" y="325" font-size="6">HS10</text>
<text x="745" y="620" transform="rotate(90 745 620)">CR1</text>
<text x="746" y="437" transform="rotate(90 746 437)">HDMI_1</text>
<text x="788" y="376" font-size="7.5">HS7</text>
<text x="770" y="312" font-size="10">H7</text>
<text x="777" y="525" font-size="10">H6</text>
<text x="804" y="555" font-size="7.5">HS8</text>
<text x="766" y="540" font-size="7.5" transform="rotate(90 766 540)">NVCL29</text>
<text x="761" y="320" font-size="6" transform="rotate(-90 761 320)">CHHB3</text>
<text x="816" y="599" font-size="10">F2</text>
<text x="954" y="533" font-size="9.5" transform="rotate(-90 954 533)">NVU15</text>
<text x="1020" y="520" font-size="7" transform="rotate(-90 1020 520)">NVCL16</text>
<text x="1037" y="520" font-size="7" transform="rotate(-90 1037 520)">NVCL12</text>
<text x="1045" y="520" font-size="7" transform="rotate(-90 1045 520)">NVCL5</text>
<text x="1053" y="520" font-size="7" transform="rotate(-90 1053 520)">NVCL15</text>
<text x="993" y="582" font-size="9.5" transform="rotate(-90 993 582)">NVL3</text>
<text x="1018" y="582" font-size="9.5" transform="rotate(-90 1018 582)">NVL2</text>
<text x="1042" y="582" font-size="9.5" transform="rotate(-90 1042 582)">NVL4</text>
<text x="984" y="612" font-size="8.5" transform="rotate(90 984 612)">NVQ7</text>
<text x="999" y="612" font-size="8.5" transform="rotate(90 999 612)">NVQ8</text>
<text x="1013" y="612" font-size="8.5" transform="rotate(90 1013 612)">NVQ9</text>
<text x="1028" y="612" font-size="8.5" transform="rotate(90 1028 612)">NVQ10</text>
<text x="1042" y="612" font-size="8.5" transform="rotate(90 1042 612)">NVQ11</text>
<text x="1057" y="612" font-size="8.5" transform="rotate(90 1057 612)">NVQ6</text>
<text x="1087" y="633" font-size="8.5">DDR3_REV1</text>
<text x="1052" y="655" font-size="8">HS18</text>
<text x="1021" y="675" transform="rotate(90 1021 675)">PCH1</text>
<text x="961" y="680" transform="rotate(-90 961 680)">HS16</text>
<text x="1055" y="712" font-size="8" transform="rotate(90 1055 712)">U59</text>
<text x="953" y="751" font-size="9" transform="rotate(180 953 751)">BATT2</text>
<text x="1037" y="775" transform="rotate(-90 1037 775)">HS17</text>
<text x="909" y="778" font-size="9.5" transform="rotate(-90 909 778)">CHQ11</text>
<text x="915" y="800" font-size="9.5">CHL1</text>
<text x="892" y="780" font-size="8" transform="rotate(-90 892 780)">CHC4</text>
<text x="873" y="788" font-size="7.5" transform="rotate(-90 873 788)">CHD1</text>
<text x="895" y="808" font-size="7" transform="rotate(90 895 808)">LED1</text>
<text x="870" y="820" font-size="9.5" transform="rotate(90 870 820)">CHCL1</text>
<text x="852" y="817" font-size="8" transform="rotate(90 852 817)">CHC8</text>
<text x="859" y="808" font-size="7" transform="rotate(90 859 808)">CHD2</text>
<text x="826" y="821" font-size="9">L33</text>
<text x="777" y="774" font-size="10">H5</text>
<text x="831" y="771" font-size="6">Q14</text>
<text x="818" y="778" font-size="6">Q17</text>
<text x="825" y="637" font-size="9.5" transform="rotate(90 825 637)">NVU3</text>
<text x="892" y="640" font-size="8.5" transform="rotate(180 892 640)">GPU_FAN1</text>
<text x="878" y="737" font-size="8" transform="rotate(-90 878 737)">CL42</text>
<text x="909" y="711" font-size="8" transform="rotate(-90 909 711)">CL7030</text>
<text x="947" y="670" font-size="8" transform="rotate(-90 947 670)">CL7031</text>
<text x="936" y="699" font-size="6.5" transform="rotate(180 936 699)">L7010</text>
<text x="1058" y="834" font-size="8" transform="rotate(180 1058 834)">U35</text>
<text x="986" y="832" font-size="8" transform="rotate(90 986 832)">Q4</text>
<text x="961" y="613" font-size="6.5" transform="rotate(-90 961 613)">NVCL39</text>
<text x="970" y="613" font-size="6.5" transform="rotate(-90 970 613)">NVCL34</text>
<text x="1016" y="647" font-size="6.5" transform="rotate(-90 1016 647)">NVCL41</text>
<text x="1024" y="647" font-size="6.5" transform="rotate(-90 1024 647)">NVCL40</text>
<text x="1032" y="647" font-size="6.5" transform="rotate(-90 1032 647)">NVCL37</text>
<text x="1040" y="647" font-size="6.5" transform="rotate(-90 1040 647)">NVCL38</text>
<text x="1006" y="649" font-size="7">Y6</text>
<text x="1259" y="574" font-size="6">HS11</text>
<text x="1251" y="624" font-size="7.5" transform="rotate(90 1251 624)">CL41</text>
<text x="1260" y="623" font-size="7.5" transform="rotate(90 1260 623)">CL128</text>
<text x="1249" y="642" font-size="9.5">L35</text>
<text x="1235" y="666" font-size="5.5" transform="rotate(180 1235 666)">CL40</text>
<text x="1256" y="680" font-size="8" transform="rotate(90 1256 680)">U87</text>
<text x="1253" y="716" font-size="8" transform="rotate(180 1253 716)">CL135</text>
<text x="1202" y="727" font-size="8.5" transform="rotate(180 1202 727)">DDR3_STD1</text>
<text x="1256" y="753" font-size="8" transform="rotate(90 1256 753)">CL124</text>
<text x="1282" y="787" font-size="9.5">WIFI_1</text>
<text x="1250" y="825" font-size="5.5" transform="rotate(180 1250 825)">TPM2CONN1</text>
<text x="1317" y="642" font-size="8" transform="rotate(90 1317 642)">CPU_FAN1</text>
<text x="1327" y="683" font-size="5.5">HS15</text>
<text x="1366" y="644" font-size="9" transform="rotate(-90 1366 644)">Q652</text>
<text x="1362" y="707" font-size="8.5" transform="rotate(-90 1362 707)">CL7033</text>
<text x="1395" y="697" font-size="9" transform="rotate(90 1395 697)">L7011</text>
<text x="1408" y="622" font-size="9" transform="rotate(-90 1408 622)">USB3_1</text>
<text x="1408" y="720" font-size="9" transform="rotate(-90 1408 720)">USB3_2</text>
<text x="1417" y="706" font-size="8" transform="rotate(-90 1417 706)">CL121</text>
<text x="1382" y="759" font-size="10">H3</text>
<text x="1352" y="791" font-size="9" transform="rotate(-90 1352 791)">U96</text>
<text x="1395" y="800" font-size="9" transform="rotate(-90 1395 800)">SPK1</text>
<text x="1456" y="817" font-size="9" transform="rotate(-90 1456 817)">HP_MIC1</text>
<text x="1441" y="555" font-size="10">H1</text>
<text x="1427" y="578" font-size="8" transform="rotate(-90 1427 578)">CL120</text>
<text x="1428" y="535" font-size="9" transform="rotate(-90 1428 535)">VGA1</text>
<text x="1417" y="512" font-size="9" transform="rotate(90 1417 512)">DVU1</text>
<text x="1373" y="587" font-size="7" transform="rotate(-90 1373 587)">L1012</text>
</g>
</svg>

<!-- status bar -->
<div class="a" style="left:0;top:838px;width:1523px;height:20px;background:#0090d8"></div>
<div class="t" style="left:585px;top:840px;font-family:'Liberation Mono',monospace;font-size:15px;color:#fff;line-height:19px;-webkit-text-stroke:.2px #fff">XZZ Schematics https://www.xzztools.com</div>
</body></html>
